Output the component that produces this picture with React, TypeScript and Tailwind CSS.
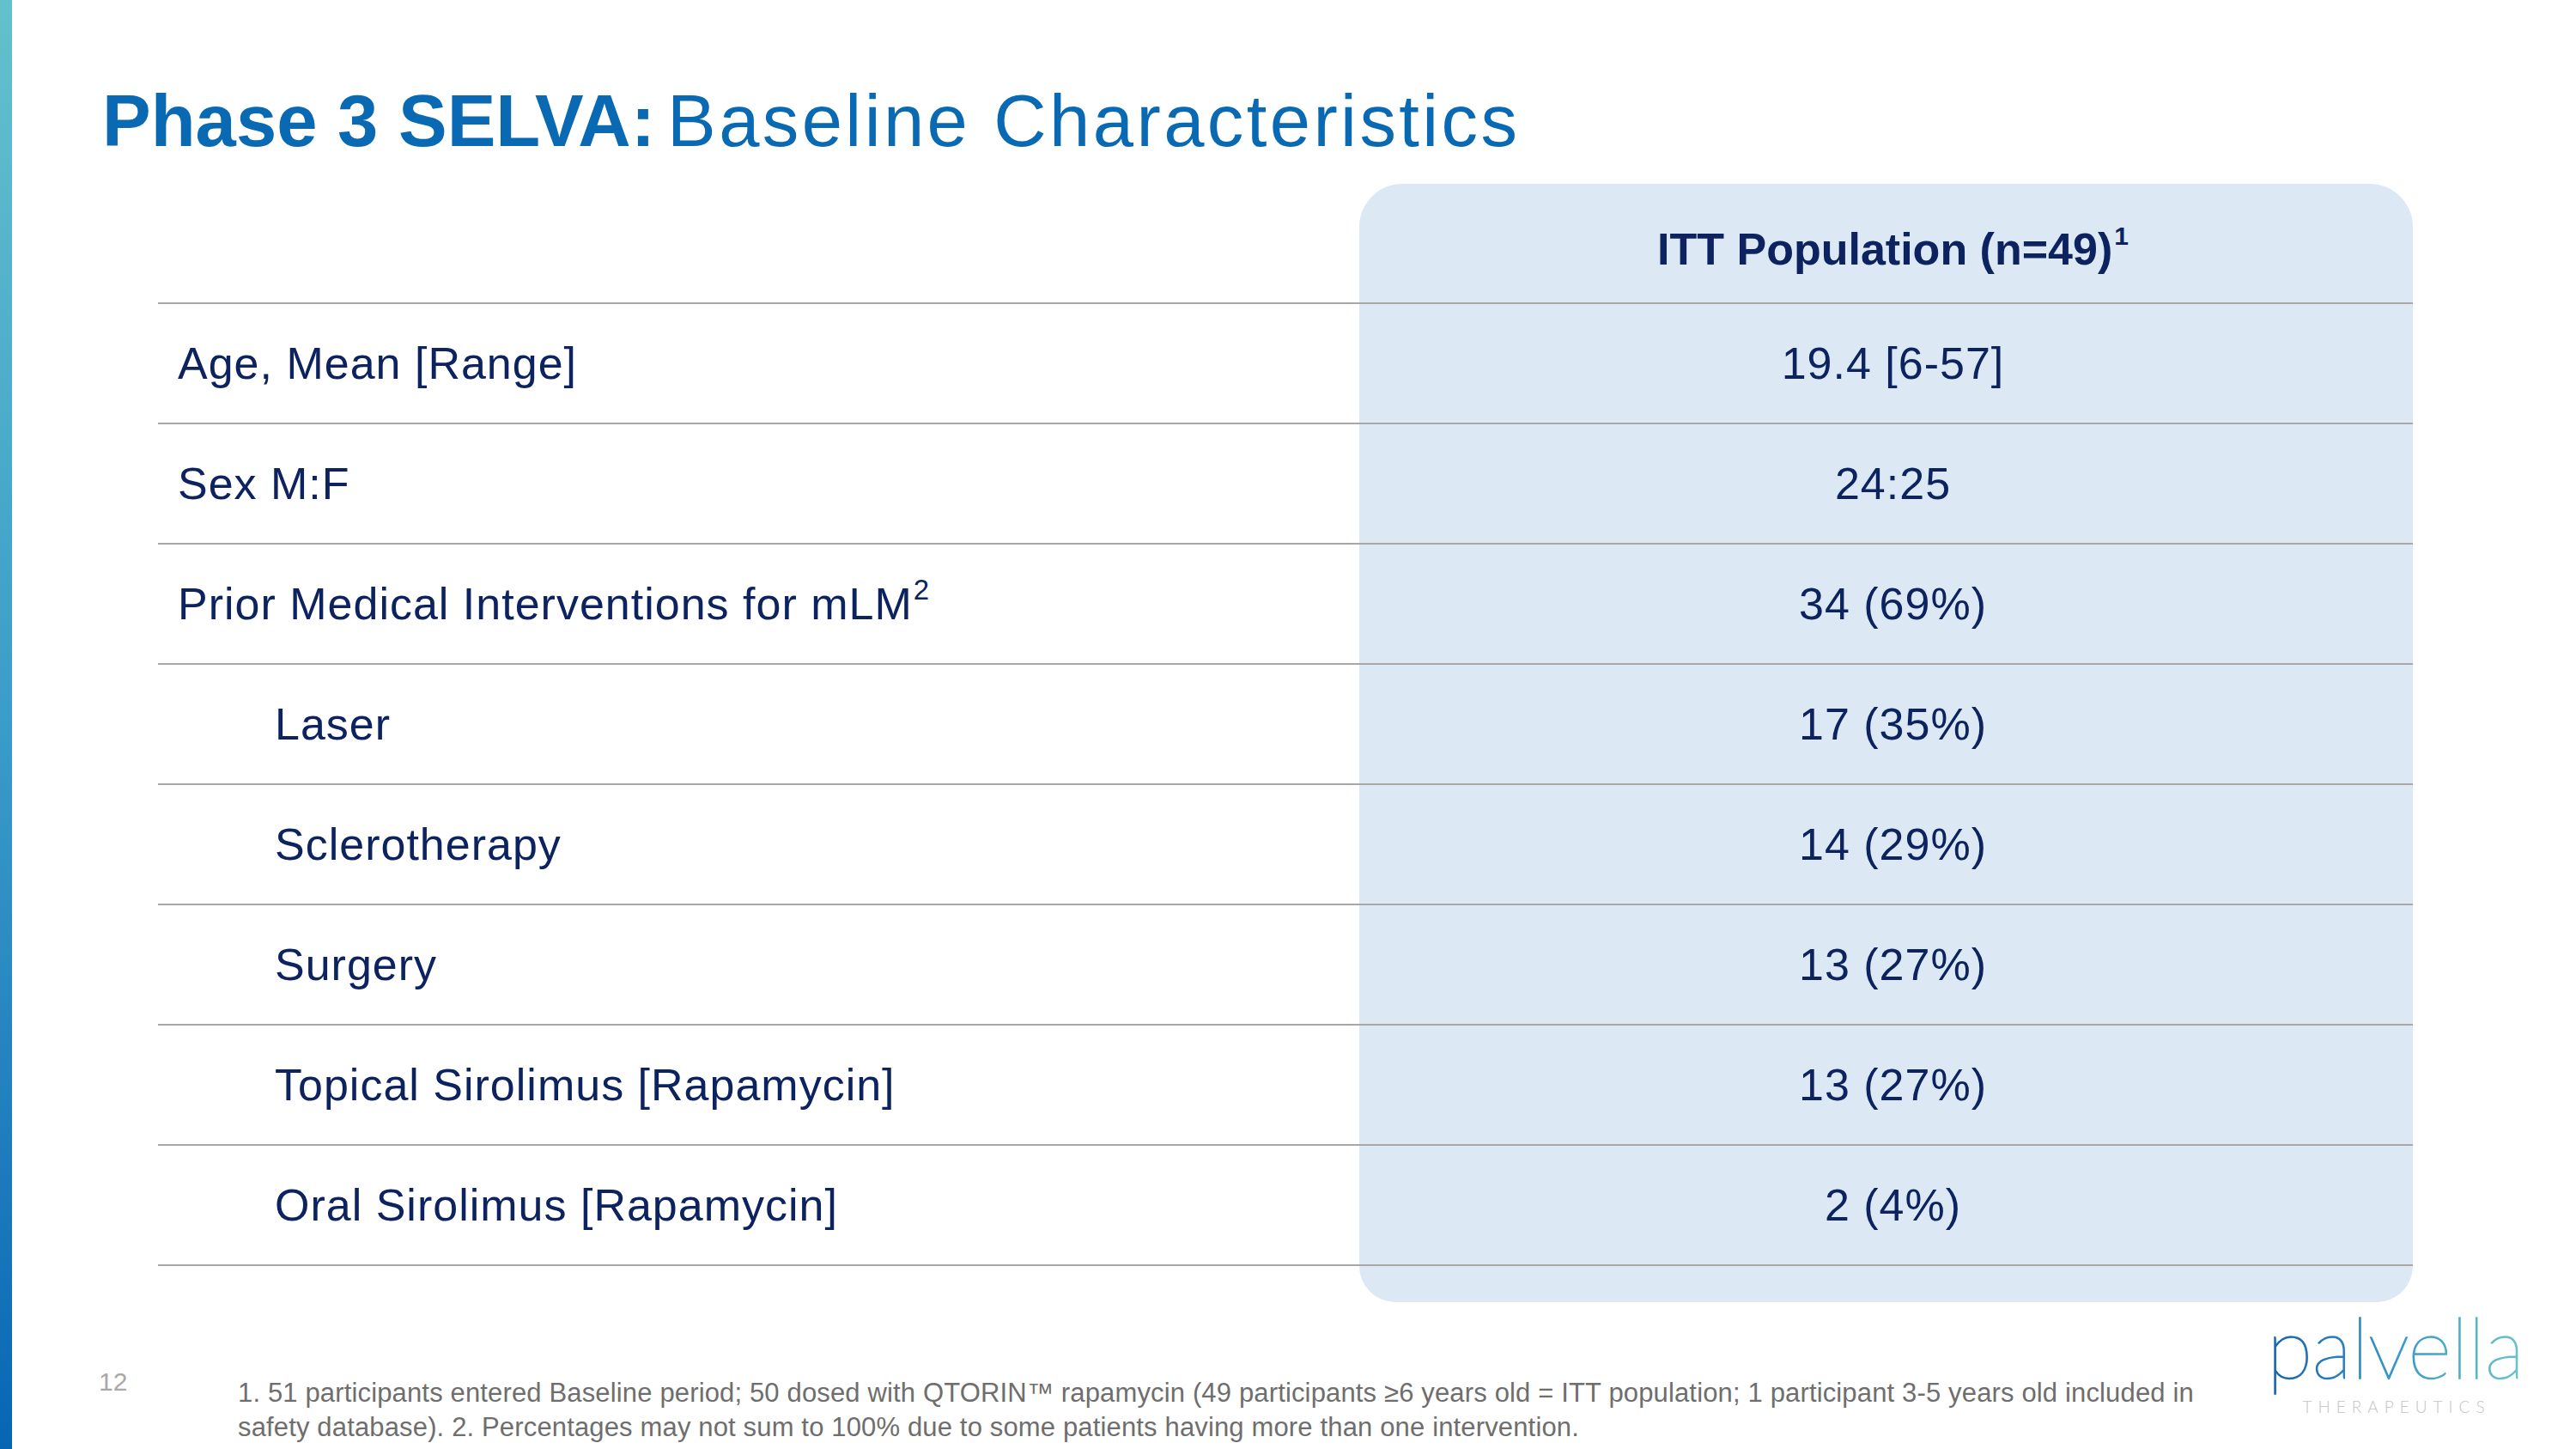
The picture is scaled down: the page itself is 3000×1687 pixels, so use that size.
import React from 'react';

type Row = { label: string; sup?: string; value: string; indent?: boolean };

const rows: Row[] = [
  { label: 'Age, Mean [Range]', value: '19.4 [6-57]' },
  { label: 'Sex M:F', value: '24:25' },
  { label: 'Prior Medical Interventions for mLM', sup: '2', value: '34 (69%)' },
  { label: 'Laser', value: '17 (35%)', indent: true },
  { label: 'Sclerotherapy', value: '14 (29%)', indent: true },
  { label: 'Surgery', value: '13 (27%)', indent: true },
  { label: 'Topical Sirolimus [Rapamycin]', value: '13 (27%)', indent: true },
  { label: 'Oral Sirolimus [Rapamycin]', value: '2 (4%)', indent: true },
];

function Logo() {
  return (
    <div className="ml-auto mr-[58px] mt-[16px] flex flex-col items-center">
      <svg width="302" height="95" viewBox="0 0 302 95" className="overflow-visible">
        <defs>
          <linearGradient id="palvella-grad" x1="0" y1="0" x2="302" y2="0" gradientUnits="userSpaceOnUse">
            <stop offset="0" stopColor="#1761ad" />
            <stop offset="0.5" stopColor="#3798ca" />
            <stop offset="1" stopColor="#6cc6c9" />
          </linearGradient>
        </defs>
        <text
          x="0"
          y="73"
          textLength="300"
          lengthAdjust="spacing"
          fontFamily="Lato, sans-serif"
          fontWeight={100}
          fontSize={98}
          fill="url(#palvella-grad)"
          stroke="url(#palvella-grad)"
          strokeWidth={1.4}
        >
          palvella
        </text>
      </svg>
      <span className="mt-[4px] font-['Lato',sans-serif] text-[19px] font-light leading-[14px] tracking-[7px] text-[#c4c4c4]">
        THERAPEUTICS
      </span>
    </div>
  );
}

export default function App() {
  return (
    <div className="flex h-[1687px] w-[3000px] overflow-hidden bg-white font-['Liberation_Sans',Arial,sans-serif]">
      {/* Accent bar */}
      <div className="h-full w-[14px] shrink-0 bg-linear-to-b from-[#63c1cc] via-[#3a9cc9] to-[#0666b4]" />

      <div className="flex flex-1 flex-col">
        {/* Title */}
        <h1 className="mt-[98px] h-[85px] whitespace-nowrap pl-[105px] text-[85px] leading-none text-[#0a69b3]">
          <span className="font-bold">Phase 3 SELVA:</span>
          <span className="ml-[14px] tracking-[3.4px]">Baseline Characteristics</span>
        </h1>

        {/* Table */}
        <div className="ml-[170px] mt-[31px] flex w-[2626px] flex-col text-[52px] tracking-[1px] text-[#0c2360]">
          <div className="grid h-[140px] grid-cols-[1399px_1227px] border-b-2 border-[#a8a8a8]">
            <div />
            <div className="flex items-center justify-center rounded-t-[50px] bg-[#dce9f5] pl-[16px] pt-[14px] font-bold tracking-normal">
              ITT Population (n=49)
              <sup className="ml-[2px] text-[30px] font-bold">1</sup>
            </div>
          </div>

          {rows.map((r) => (
            <div
              key={r.label}
              className="grid h-[140px] grid-cols-[1399px_1227px] border-b-2 border-[#a8a8a8]"
            >
              <div className={`flex items-center ${r.indent ? 'pl-[136px]' : 'pl-[23px]'}`}>
                {r.label}
                {r.sup && <sup className="ml-[1px] text-[33px]">{r.sup}</sup>}
              </div>
              <div className="flex items-center justify-center bg-[#dce9f5] pl-[16px]">{r.value}</div>
            </div>
          ))}

          <div className="grid h-[42px] grid-cols-[1399px_1227px]">
            <div />
            <div className="rounded-b-[50px] bg-[#dce9f5]" />
          </div>
        </div>

        {/* Footer */}
        <div className="flex items-start pl-[101px]">
          <div className="mt-[73px] w-[162px] shrink-0 text-[30px] leading-[40px] text-[#a9a9a9]">12</div>
          <p className="mt-[86px] shrink-0 whitespace-nowrap text-[31px] leading-[40px] tracking-[0.15px] text-[#6e6e6e]">
            1. 51 participants entered Baseline period; 50 dosed with QTORIN™ rapamycin (49 participants ≥6 years old = ITT
            population; 1 participant 3-5 years old included in
            <br />
            safety database). 2. Percentages may not sum to 100% due to some patients having more than one intervention.
          </p>
          <Logo />
        </div>
      </div>
    </div>
  );
}
